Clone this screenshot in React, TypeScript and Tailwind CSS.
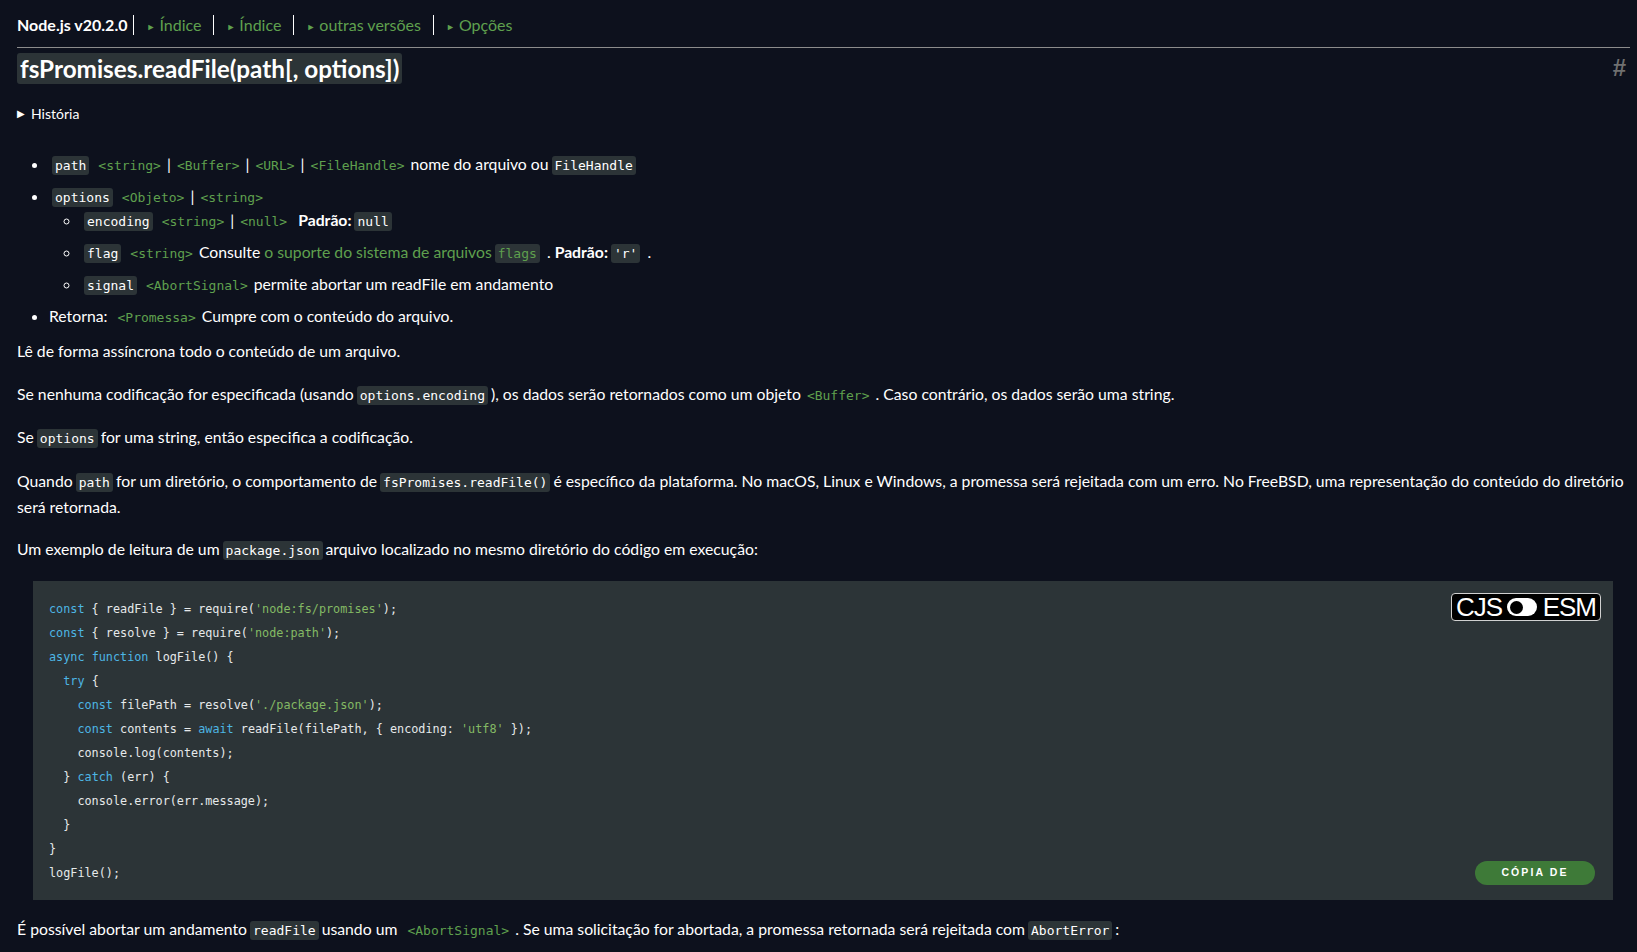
// Página de documentação do Node.js (tema escuro) — fsPromises.readFile

const mono = "font-['DejaVu_Sans_Mono','Liberation_Mono',monospace]"

// código em linha com fundo cinza
function C({ children, green }: { children: React.ReactNode; green?: boolean }) {
  return (
    <code
      className={`${mono} text-[13px] leading-[16px] bg-[#2c3437] rounded-[3px] px-[3px] py-[2px] mx-[3px] ${green ? 'text-[#5fa04e]' : 'text-white'}`}
    >
      {children}
    </code>
  )
}

// link de tipo: <string>, <Buffer> ...
function T({ children }: { children: string }) {
  return <span className={`${mono} text-[13px] leading-[16px] text-[#5fa04e] mx-[6px]`}>&lt;{children}&gt;</span>
}

function Pipe() {
  return <span className="text-white">|</span>
}

type Tok = [string, string?]

// linhas do exemplo; k = palavra-chave, s = string
const codeLines: Tok[][] = [
  [['const', 'k'], [' { readFile } = require('], ["'node:fs/promises'", 's'], [');']],
  [['const', 'k'], [' { resolve } = require('], ["'node:path'", 's'], [');']],
  [['async', 'k'], [' '], ['function', 'k'], [' logFile() {']],
  [['  '], ['try', 'k'], [' {']],
  [['    '], ['const', 'k'], [' filePath = resolve('], ["'./package.json'", 's'], [');']],
  [['    '], ['const', 'k'], [' contents = '], ['await', 'k'], [' readFile(filePath, { encoding: '], ["'utf8'", 's'], [' });']],
  [['    console.log(contents);']],
  [['  } '], ['catch', 'k'], [' (err) {']],
  [['    console.error(err.message);']],
  [['  }']],
  [['}']],
  [['logFile();']],
]

function tokColor(t?: string) {
  if (t === 'k') return 'text-[#4db6e4]'
  if (t === 's') return 'text-[#84ba64]'
  return 'text-[#e6e9ea]'
}

export default function App() {
  return (
    <div className="min-h-screen bg-[#0d111d] text-white font-['Lato','Noto_Sans',sans-serif] text-[15.75px] pl-[17px] pr-[7px]">
      {/* cabeçalho */}
      <div className="pt-[13px] flex items-center h-[37px] text-[16px]">
        <span className="font-bold pr-[6px]">Node.js v20.2.0</span>
        {['Índice', 'Índice', 'outras versões', 'Opções'].map((t, i) => (
          <span key={i} className="border-l border-white h-[20px] flex items-center pl-[12px] pr-[12px] text-[#5fa04e]">
            <span className="text-[9px] mr-[4px] mt-[3px]">►</span>
            {t}
          </span>
        ))}
      </div>
      <div className="mt-[10px] border-t border-[#8c8c8c]" />

      {/* título */}
      <div className="mt-[2px] flex items-center justify-between">
        <h3 className="text-[24.3px] font-bold leading-[31px]">
          <span className="bg-[#2c3437] rounded-[3px] px-[3px] py-[1px]">fsPromises.readFile(path[, options])</span>
        </h3>
        <span className="text-[#707070] text-[24px] font-bold mr-[4px] font-['Liberation_Sans',sans-serif]">#</span>
      </div>

      {/* história */}
      <div className="mt-[15px] flex items-center h-[24px] text-[14px]">
        <span className="text-[10px] mr-[6px]">▶</span>
        História
      </div>

      {/* parâmetros */}
      <ul className="mt-[27px] list-disc pl-[32px] space-y-2 leading-[24px]">
        <li>
          <C>path</C>
          <T>string</T>
          <Pipe />
          <T>Buffer</T>
          <Pipe />
          <T>URL</T>
          <Pipe />
          <T>FileHandle</T>
          nome do arquivo ou<C>FileHandle</C>
        </li>
        <li>
          <C>options</C>
          <T>Objeto</T>
          <Pipe />
          <T>string</T>
          <ul className="list-[circle] pl-[32px] space-y-2">
            <li>
              <C>encoding</C>
              <T>string</T>
              <Pipe />
              <T>null</T>
              <b className="ml-[5px]">Padrão:</b>
              <C>null</C>
            </li>
            <li>
              <C>flag</C>
              <T>string</T>
              Consulte <span className="text-[#5fa04e]">o suporte do sistema de arquivos</span>
              <C green>flags</C> . <b>Padrão:</b>
              <C>'r'</C> .
            </li>
            <li>
              <C>signal</C>
              <T>AbortSignal</T>
              permite abortar um readFile em andamento
            </li>
          </ul>
        </li>
        <li>
          Retorna: <T>Promessa</T>
          Cumpre com o conteúdo do arquivo.
        </li>
      </ul>

      {/* descrição */}
      <div className="mt-[10px] leading-[26px]">
        <p className="mb-[17px]">Lê de forma assíncrona todo o conteúdo de um arquivo.</p>
        <p className="mb-[17px]">
          Se nenhuma codificação for especificada (usando<C>options.encoding</C>), os dados serão retornados como um objeto
          <T>Buffer</T>. Caso contrário, os dados serão uma string.
        </p>
        <p className="mb-[18px]">
          Se<C>options</C>for uma string, então especifica a codificação.
        </p>
        <p className="mb-[16px]">
          Quando<C>path</C>for um diretório, o comportamento de<C>fsPromises.readFile()</C>é específico da plataforma. No
          macOS, Linux e Windows, a promessa será rejeitada com um erro. No FreeBSD, uma representação do conteúdo do
          diretório será retornada.
        </p>
        <p>
          Um exemplo de leitura de um<C>package.json</C>arquivo localizado no mesmo diretório do código em execução:
        </p>
      </div>

      {/* bloco de código */}
      <div className="relative mt-[19px] ml-[16px] mr-[17px] bg-[#2c3437] pt-[16px] pb-[15px] pl-[16px]">
        <pre className={`${mono} text-[11.8px] leading-[24px]`}>
          {codeLines.map((line, i) => (
            <div key={i}>
              {line.map(([txt, t], j) => (
                <span key={j} className={tokColor(t)}>
                  {txt}
                </span>
              ))}
            </div>
          ))}
        </pre>

        {/* seletor CJS / ESM */}
        <div className="absolute top-[12px] right-[12px] w-[150px] h-[28px] bg-black border border-[#d0d0d0] rounded-[4px] flex items-center justify-between px-[4px] font-['Liberation_Sans',sans-serif] text-[26px] leading-none text-white">
          <span className="tracking-[-1px]">CJS</span>
          <span className="w-[30px] h-[18px] bg-white rounded-full flex items-center pl-[3px]">
            <span className="w-[13px] h-[13px] rounded-full bg-black" />
          </span>
          <span className="tracking-[-1px]">ESM</span>
        </div>

        {/* botão copiar */}
        <button className="absolute bottom-[15px] right-[18px] w-[120px] h-[24px] rounded-full bg-[#3e7a38] text-white font-['Liberation_Sans',sans-serif] font-bold text-[10.5px] tracking-[0.2em]">
          CÓPIA DE
        </button>
      </div>

      <p className="mt-[16px] leading-[26px]">
        É possível abortar um andamento<C>readFile</C>usando um <T>AbortSignal</T>. Se uma solicitação for abortada, a
        promessa retornada será rejeitada com<C>AbortError</C>:
      </p>
    </div>
  )
}
